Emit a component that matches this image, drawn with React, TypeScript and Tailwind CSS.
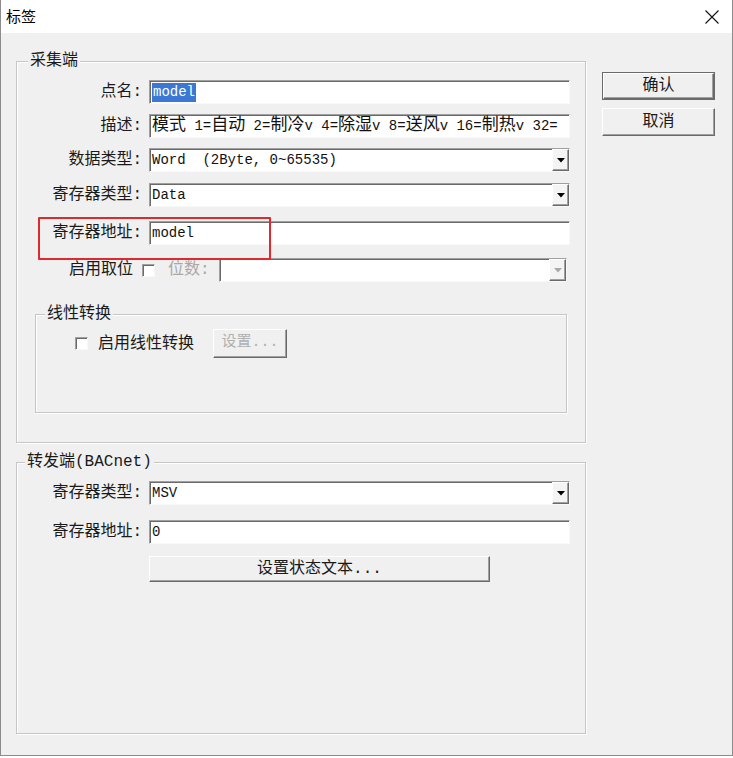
import React from "react";
import clsx from "clsx";

const ui = "font-['Liberation_Mono','Noto_Sans_CJK_SC',monospace]";
const sunken =
  "border border-t-[#a0a0a0] border-l-[#a0a0a0] border-b-[#f8f8f8] border-r-[#f8f8f8] shadow-[inset_1px_1px_0_#6a6a6a]";
const raised =
  "border border-t-white border-l-white border-b-[#6a6a6a] border-r-[#6a6a6a] shadow-[inset_-1px_-1px_0_#a0a0a0]";
const etched = "border border-[#c6c6c6] shadow-[inset_1px_1px_0_#fff,1px_1px_0_#fff]";

// wrap CJK runs so they get the wider size of the old dialog font
function Mix({ text, cjk }: { text: string; cjk: string }) {
  const parts = text.split(/([\u3400-\u9fff]+)/);
  return (
    <span className="whitespace-pre">
      {parts.map((p, i) =>
        /[\u3400-\u9fff]/.test(p) ? (
          <span key={i} className={cjk}>
            {p}
          </span>
        ) : (
          p
        )
      )}
    </span>
  );
}

function Arrow({ disabled }: { disabled?: boolean }) {
  return (
    <div className={clsx("w-[17px] self-stretch flex items-center justify-center bg-[#f4f4f4]", raised)}>
      <svg width="8" height="5" viewBox="0 0 8 5">
        <path d="M0 0H8L4 4.5Z" fill={disabled ? "#a8a8a8" : "#000"} />
      </svg>
    </div>
  );
}

function Field({ children, w = "w-[421px]", select, disabled }: { children?: React.ReactNode; w?: string; select?: boolean; disabled?: boolean }) {
  return (
    <div className={clsx("h-[24px] bg-white flex items-stretch", w, sunken)}>
      <div className="flex-1 flex items-center pl-[2px] text-[14px] text-[#111] whitespace-nowrap overflow-hidden">
        <span className="whitespace-pre">{children}</span>
      </div>
      {select && <Arrow disabled={disabled} />}
    </div>
  );
}

function Row({ label, className, children }: { label: string; className?: string; children: React.ReactNode }) {
  return (
    <div className={clsx("flex items-center", className)}>
      <div className="w-[125px] text-right text-[16px] leading-[20px] text-[#1a1a1a]">{label}</div>
      <div className="ml-[7px]">{children}</div>
    </div>
  );
}

function Check() {
  return <div className={clsx("w-[13px] h-[13px] bg-white", sunken)} />;
}

function Legend({ text, className }: { text: string; className: string }) {
  return (
    <div className={clsx("-mt-[9px] w-fit px-[2px] bg-[#f0f0f0] text-[16px] leading-[16px] text-[#1a1a1a]", className)}>{text}</div>
  );
}

export default function App() {
  return (
    <div className={clsx("relative w-[733px] h-[758px] bg-white", ui)}>
      <div className="h-[756px] flex flex-col border-l border-r border-b border-[#8c8c8c] bg-[#f0f0f0]">
        <div className="h-[33px] shrink-0 bg-white flex items-center justify-between pl-[5px] pr-[13px]">
          <span className="font-['Noto_Sans_CJK_SC',sans-serif] text-[15px] text-black">标签</span>
          <svg width="14" height="14" viewBox="0 0 14 14">
            <path d="M0.5 0.5L13.5 13.5M13.5 0.5L0.5 13.5" stroke="#111" strokeWidth="1.1" />
          </svg>
        </div>

        <div className="flex pl-[15px] pt-[28px]">
          <div className="w-[570px] flex flex-col">
            {/* 采集端 */}
            <div className={clsx("h-[382px] flex flex-col", etched)}>
              <Legend text="采集端" className="ml-[11px]" />
              <Row label="点名:" className="mt-[11px]">
                <Field>
                  <span className="bg-[#3a78d4] text-white leading-[19px] px-[1px] inline-block">model</span>
                </Field>
              </Row>
              <Row label="描述:" className="mt-[10px]">
                <Field>
                  <Mix text="模式 1=自动 2=制冷v 4=除湿v 8=送风v 16=制热v 32=" cjk="text-[17px]" />
                </Field>
              </Row>
              <Row label="数据类型:" className="mt-[10px]">
                <Field select>Word  (2Byte, 0~65535)</Field>
              </Row>
              <Row label="寄存器类型:" className="mt-[11px]">
                <Field select>Data</Field>
              </Row>
              <Row label="寄存器地址:" className="mt-[14px]">
                <Field>model</Field>
              </Row>
              <div className="mt-[13px] flex items-center">
                <div className="w-[116px] text-right text-[16px] leading-[20px] text-[#1a1a1a]">启用取位</div>
                <div className="ml-[9px]">
                  <Check />
                </div>
                <div className="ml-[13px] w-[51px] text-[16px] leading-[20px] text-[#a8a8a8]">位数:</div>
                <Field w="w-[348px]" select disabled />
              </div>

              {/* 线性转换 */}
              <div className={clsx("mt-[32px] ml-[18px] w-[532px] h-[99px] flex flex-col", etched)}>
                <Legend text="线性转换" className="ml-[9px]" />
                <div className="mt-[7px] h-[29px] flex items-center pl-[39px]">
                  <Check />
                  <span className="ml-[10px] text-[16px] text-[#1a1a1a]">启用线性转换</span>
                  <div className={clsx("ml-[19px] w-[74px] h-[29px] flex items-center justify-center text-[15px] text-[#b0b0b0]", raised)}>
                    设置...
                  </div>
                </div>
              </div>
            </div>

            {/* 转发端 */}
            <div className={clsx("mt-[19px] h-[272px] flex flex-col", etched)}>
              <Legend text="转发端(BACnet)" className="ml-[8px]" />
              <Row label="寄存器类型:" className="mt-[11px]">
                <Field select>MSV</Field>
              </Row>
              <Row label="寄存器地址:" className="mt-[15px]">
                <Field>0</Field>
              </Row>
              <div className={clsx("mt-[12px] ml-[132px] w-[341px] h-[26px] flex items-center justify-center text-[16px] text-[#1a1a1a]", raised)}>
                设置状态文本...
              </div>
            </div>
          </div>

          <div className="ml-[16px] mt-[11px] flex flex-col gap-[8px]">
            <div className="w-[113px] h-[28px] border border-[#6a6a6a] flex">
              <div className={clsx("flex-1 flex items-center justify-center text-[16px] text-[#1a1a1a]", raised)}>确认</div>
            </div>
            <div className={clsx("w-[113px] h-[28px] flex items-center justify-center text-[16px] text-[#1a1a1a]", raised)}>取消</div>
          </div>
        </div>
      </div>

      {/* annotation box drawn over the screenshot */}
      <div className="absolute left-[38px] top-[217px] w-[233px] h-[43px] border-2 border-[#e2282f] rounded-[1px]" />
    </div>
  );
}
